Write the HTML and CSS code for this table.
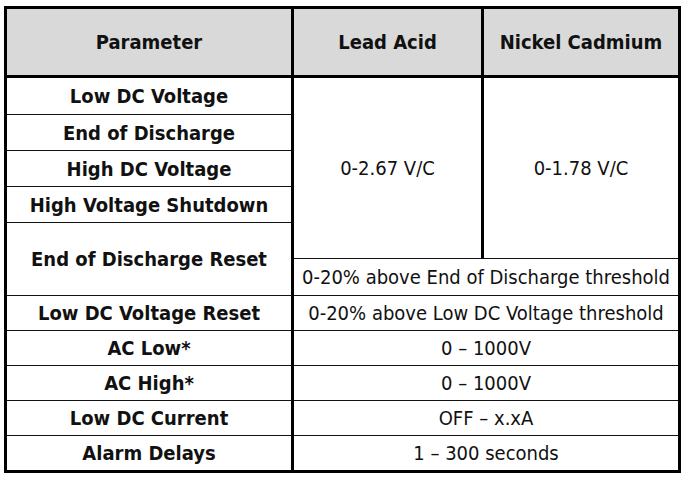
FILE: index.html
```html
<!DOCTYPE html>
<html lang="en">
<head>
<meta charset="utf-8">
<title>Battery Parameters</title>
<link rel="stylesheet" href="styles.css">
</head>
<body>
<div class="page">
  <table class="params">
    <thead>
      <tr class="head-row">
        <th class="c1">Parameter</th>
        <th class="c2">Lead Acid</th>
        <th class="c3">Nickel Cadmium</th>
      </tr>
    </thead>
    <tbody>
      <tr class="r37">
        <td class="name">Low DC Voltage</td>
        <td class="val sep line" rowspan="5">0-2.67 V/C</td>
        <td class="val line" rowspan="5">0-1.78 V/C</td>
      </tr>
      <tr class="r36"><td class="name">End of Discharge</td></tr>
      <tr class="r36"><td class="name">High DC Voltage</td></tr>
      <tr class="r36"><td class="name">High Voltage Shutdown</td></tr>
      <tr class="r36"><td class="name" rowspan="2">End of Discharge Reset</td></tr>
      <tr class="r37"><td class="val line" colspan="2">0-20% above End of Discharge threshold</td></tr>
      <tr class="r35">
        <td class="name">Low DC Voltage Reset</td>
        <td class="val line" colspan="2">0-20% above Low DC Voltage threshold</td>
      </tr>
      <tr class="r35">
        <td class="name">AC Low*</td>
        <td class="val line" colspan="2">0 – 1000V</td>
      </tr>
      <tr class="r35">
        <td class="name">AC High*</td>
        <td class="val line" colspan="2">0 – 1000V</td>
      </tr>
      <tr class="r35">
        <td class="name">Low DC Current</td>
        <td class="val line" colspan="2">OFF – x.xA</td>
      </tr>
      <tr class="r34">
        <td class="name last">Alarm Delays</td>
        <td class="val" colspan="2">1 – 300 seconds</td>
      </tr>
    </tbody>
  </table>
</div>
</body>
</html>
```
FILE: styles.css
```css
html, body {
  margin: 0;
  padding: 0;
  background: #ffffff;
}

.page {
  padding: 6px 0 0 4px;
}

.params {
  border-collapse: separate;
  border-spacing: 0;
  table-layout: fixed;
  width: 677px;
  border: 3px solid #000;
  font-family: "DejaVu Sans Condensed", "DejaVu Sans", sans-serif;
  font-stretch: condensed;
  font-size: 20px;
  color: #111;
}

.params th,
.params td {
  box-sizing: border-box;
  padding: 0;
  text-align: center;
  vertical-align: middle;
  white-space: nowrap;
}

.head-row { height: 69px; }

.head-row th {
  background: #d9d9d9;
  font-weight: bold;
  border-bottom: 3px solid #000;
}

.c1 { width: 287px; border-right: 3px solid #000; }
.c2 { width: 190px; border-right: 3px solid #000; }
.c3 { width: 194px; }

.name {
  font-weight: bold;
  border-right: 3px solid #000;
  border-bottom: 1px solid #111;
}

.name.last {
  border-bottom: none;
}

.val {
  font-weight: normal;
}

.val.sep {
  border-right: 3px solid #000;
}

.val.line {
  border-bottom: 1px solid #111;
}

.r37 { height: 37px; }
.r36 { height: 36px; }
.r35 { height: 35px; }
.r34 { height: 34px; }
```
